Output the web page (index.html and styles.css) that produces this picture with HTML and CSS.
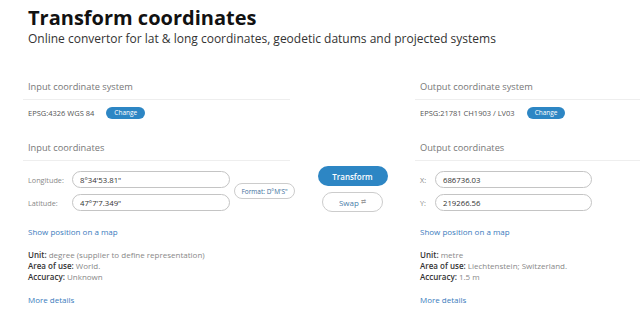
FILE: index.html
```html
<!DOCTYPE html>
<html>
<head>
<link rel="stylesheet" href="styles.css">
</head>
<body>

<div class="intro">
  <h1>Transform coordinates</h1>
  <p>Online convertor for lat &amp; long coordinates, geodetic datums and projected systems</p>
</div>

<div class="panes">
  <div class="pane">
    <h3>Input coordinate system</h3>
    <div class="crs">
      <span>EPSG:4326 WGS 84</span>
      <a class="change" href="#">Change</a>
    </div>
    <h3 class="second">Input coordinates</h3>
    <div class="fields">
      <div class="rows">
        <div class="row">
          <label class="lbl-wide" for="lon">Longitude:</label>
          <input type="text" id="lon" class="coord wide" value="8°34'53.81&quot;">
        </div>
        <div class="row">
          <label class="lbl-wide" for="lat">Latitude:</label>
          <input type="text" id="lat" class="coord wide" value="47°7'7.349&quot;">
        </div>
      </div>
      <button class="format">Format: D°M'S"</button>
    </div>
    <a class="map" href="#">Show position on a map</a>
    <div class="info">
      <div><b>Unit:</b> degree (supplier to define representation)</div>
      <div><b>Area of use:</b> World.</div>
      <div><b>Accuracy:</b> Unknown</div>
    </div>
    <a class="more" href="#">More details</a>
  </div>

  <div class="actions">
    <button class="transform">Transform</button>
    <button class="swap">Swap <span class="arrows">&#8644;</span></button>
  </div>

  <div class="pane">
    <h3>Output coordinate system</h3>
    <div class="crs">
      <span>EPSG:21781 CH1903 / LV03</span>
      <a class="change" href="#">Change</a>
    </div>
    <h3 class="second">Output coordinates</h3>
    <div class="rows">
      <div class="row">
        <label class="lbl-narrow" for="x">X:</label>
        <input type="text" id="x" class="coord" value="686736.03">
      </div>
      <div class="row">
        <label class="lbl-narrow" for="y">Y:</label>
        <input type="text" id="y" class="coord" value="219266.56">
      </div>
    </div>
    <a class="map" href="#">Show position on a map</a>
    <div class="info">
      <div><b>Unit:</b> metre</div>
      <div><b>Area of use:</b> Liechtenstein; Switzerland.</div>
      <div><b>Accuracy:</b> 1.5 m</div>
    </div>
    <a class="more" href="#">More details</a>
  </div>
</div>

</body>
</html>
```

FILE: styles.css
```css
* {
  box-sizing: border-box;
}

body {
  margin: 0;
  background: #fff;
  font-family: "Open Sans", "Liberation Sans", sans-serif;
  color: #333;
  overflow: hidden;
}

.intro {
  padding: 5px 0 0 28px;
}

.intro h1 {
  margin: 0;
  font-size: 20px;
  line-height: 26px;
  font-weight: 700;
  color: #111;
}

.intro p {
  margin: 0;
  font-size: 12px;
  line-height: 16px;
  color: #333;
}

.panes {
  display: grid;
  grid-template-columns: 267px 125px 1fr;
  margin: 32px 0 0 23px;
}

.pane h3 {
  margin: 0;
  padding: 0 5px 5px;
  font-size: 9.25px;
  line-height: 15px;
  font-weight: 400;
  color: #777;
  border-bottom: 1px solid #eee;
}

.pane h3.second {
  margin-top: 21px;
}

.crs {
  display: flex;
  align-items: center;
  gap: 12px;
  height: 12px;
  margin-top: 7px;
  padding-left: 5px;
  font-size: 7.5px;
  color: #555;
}

.change {
  display: inline-block;
  height: 12px;
  line-height: 12px;
  padding: 0 8px;
  border-radius: 6px;
  background: #2d86c4;
  color: #fff;
  font-size: 6.5px;
  text-decoration: none;
}

.fields {
  display: flex;
  align-items: center;
  gap: 4px;
}

.rows {
  display: flex;
  flex-direction: column;
  gap: 6px;
  margin-top: 10px;
  padding-left: 5px;
}

.fields .rows {
  flex-shrink: 0;
}

.row {
  display: flex;
  align-items: center;
}

.lbl-wide,
.lbl-narrow {
  font-size: 7.25px;
  color: #888;
}

.lbl-wide {
  width: 44px;
}

.lbl-narrow {
  width: 15px;
}

.coord {
  width: 157px;
  height: 17px;
  padding: 0 7px;
  border: 1px solid #c4c4c4;
  border-radius: 9px;
  font-family: inherit;
  font-size: 7.75px;
  color: #333;
  background: #fff;
}

.coord.wide {
  width: 158px;
}

.format {
  flex-shrink: 0;
  width: 61px;
  height: 16px;
  margin-top: 10px;
  padding: 0;
  border: 1px solid #ccc;
  border-radius: 8px;
  background: #fff;
  font-family: inherit;
  font-size: 6.5px;
  color: #3b6f9c;
}

.map,
.more {
  display: block;
  padding-left: 5px;
  font-size: 8px;
  line-height: 13px;
  color: #3a7bbd;
  text-decoration: none;
}

.map {
  margin-top: 14px;
}

.info {
  margin-top: 11px;
  padding-left: 5px;
  font-size: 8px;
  line-height: 11px;
  color: #888;
}

.info b {
  font-weight: 600;
  color: #333;
}

.more {
  margin-top: 11px;
}

.actions {
  display: flex;
  flex-direction: column;
  align-items: center;
  gap: 6px;
  padding-top: 87px;
}

.transform,
.swap {
  height: 20px;
  padding: 0;
  border-radius: 10px;
  font-family: inherit;
  font-size: 8px;
  cursor: pointer;
}

.transform {
  width: 70px;
  border: none;
  background: #2d86c4;
  color: #fff;
  font-weight: 600;
}

.swap {
  width: 61px;
  border: 1px solid #ccc;
  background: #fff;
  color: #4a7eaa;
}

.arrows {
  font-size: 6px;
  color: #999;
  vertical-align: 2px;
}
```
